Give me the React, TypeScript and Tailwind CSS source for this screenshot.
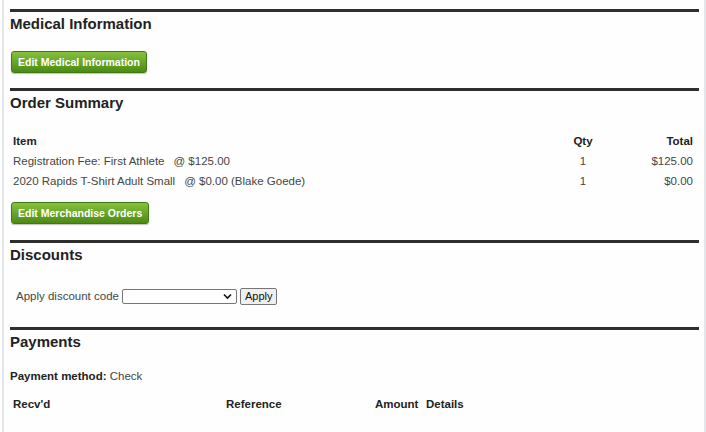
import React from 'react';

const font = { fontFamily: '"Liberation Sans", Arial, sans-serif' };

const SectionHeading: React.FC<{ title: string }> = ({ title }) => (
  <div>
    <div className="h-[3px] bg-[#2f2f2f]" />
    <h2 className="pt-[2px] text-[15px] leading-[20px] font-bold text-[#222]">{title}</h2>
  </div>
);

const GreenButton: React.FC<{ label: string }> = ({ label }) => (
  <button className="h-[22px] px-[6px] rounded-[3px] border border-[#3f7a10] bg-gradient-to-b from-[#86c23c] to-[#4d8a13] text-white text-[10.5px] font-bold leading-[20px] shadow-[0_1px_1px_rgba(0,0,0,0.25)]">
    {label}
  </button>
);

const orderItems = [
  { item: 'Registration Fee: First Athlete', price: '@ $125.00', qty: 1, total: '$125.00' },
  { item: '2020 Rapids T-Shirt Adult Small', price: '@ $0.00 (Blake Goede)', qty: 1, total: '$0.00' },
];

export default function App() {
  return (
    <div className="w-[706px] h-[432px] overflow-hidden bg-white pl-[2px]" style={font}>
      <div className="h-full border-l-2 border-r-2 border-[#e4e7e9] bg-[#fefefe] pl-[6px] pr-[5px] pt-[9px]">
        <SectionHeading title="Medical Information" />
        <div className="flex pt-[17px] pb-[15px] pl-[1px]">
          <GreenButton label="Edit Medical Information" />
        </div>

        <SectionHeading title="Order Summary" />
        <div className="pt-[19px] pl-[3px] pr-[6px] text-[11.5px] text-[#454545]">
          <div className="grid grid-cols-[1fr_60px_80px] h-[20px] items-center font-bold text-[#222]">
            <div>Item</div>
            <div className="text-center">Qty</div>
            <div className="text-right">Total</div>
          </div>
          {orderItems.map((x) => (
            <div key={x.item} className="grid grid-cols-[1fr_60px_80px] h-[20px] items-center">
              <div>
                {x.item}
                <span className="ml-[9px]">{x.price}</span>
              </div>
              <div className="text-center">{x.qty}</div>
              <div className="text-right">{x.total}</div>
            </div>
          ))}
        </div>
        <div className="flex pt-[10px] pb-[16px] pl-[1px]">
          <GreenButton label="Edit Merchandise Orders" />
        </div>

        <SectionHeading title="Discounts" />
        <div className="pt-[23px] pb-[22px] pl-[6px] h-[62px] flex items-center gap-[3px] text-[11.5px] text-[#454545]">
          <span>Apply discount code</span>
          <div className="relative w-[115px] h-[15px] border border-[#767676] rounded-[2px] bg-white">
            <svg className="absolute right-[4px] top-[3px]" width="9" height="7" viewBox="0 0 9 7">
              <path d="M1 1.5 L4.5 5 L8 1.5" fill="none" stroke="#111" strokeWidth="1.6" />
            </svg>
          </div>
          <button className="h-[17px] px-[4px] border border-[#767676] rounded-[2px] bg-[#efefef] text-[11px] text-[#111] leading-[15px]">
            Apply
          </button>
        </div>

        <SectionHeading title="Payments" />
        <div className="pt-[17px] text-[11.5px] text-[#454545] leading-[14px]">
          <span className="font-bold text-[#222]">Payment method:</span> Check
        </div>
        <div className="pt-[14px] pl-[3px] flex text-[11.5px] font-bold text-[#222] leading-[14px]">
          <div className="w-[213px]">Recv'd</div>
          <div className="w-[149px]">Reference</div>
          <div className="w-[51px]">Amount</div>
          <div>Details</div>
        </div>
      </div>
    </div>
  );
}
